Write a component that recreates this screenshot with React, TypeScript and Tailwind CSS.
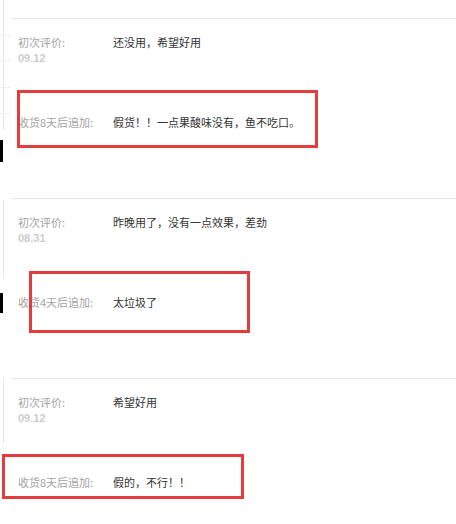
import React from "react";

type Review = {
  first: string;
  date: string;
  appendLabel: string;
  append: string;
};

const reviews: Review[] = [
  { first: "还没用，希望好用", date: "09.12", appendLabel: "收货8天后追加:", append: "假货！！一点果酸味没有，鱼不吃口。" },
  { first: "昨晚用了，没有一点效果，差劲", date: "08.31", appendLabel: "收货4天后追加:", append: "太垃圾了" },
  { first: "希望好用", date: "09.12", appendLabel: "收货8天后追加:", append: "假的，不行！！" },
];

// red annotation boxes drawn over the screenshot
const marks = [
  "left-[17px] top-[90px] w-[301px] h-[58px]",
  "left-[29px] top-[271px] w-[221px] h-[62px]",
  "left-[2px] top-[454px] w-[242px] h-[45px]",
];

function ReviewBlock({ review }: { review: Review }) {
  return (
    <div className="h-[180px] border-t border-[#e6e6e6] pl-[6px] pt-[15px]">
      <div className="flex">
        <div className="w-[95px] shrink-0">
          <div className="leading-[16px] text-[#a3a3a3]">初次评价:</div>
          <div className="font-['Liberation_Sans',sans-serif] font-bold leading-[16px] text-[#cccccc]">
            {review.date}
          </div>
        </div>
        <div className="leading-[16px] text-[#333]">{review.first}</div>
      </div>
      <div className="mt-[48px] flex">
        <div className="w-[95px] shrink-0 leading-[16px] text-[#a3a3a3]">{review.appendLabel}</div>
        <div className="leading-[16px] text-[#333]">{review.append}</div>
      </div>
    </div>
  );
}

function LeftStrip() {
  return (
    <div className="w-[12px] shrink-0">
      <div className="relative h-[130px]">
        <div className="ml-[3px] h-full w-px bg-[#e4e4e4]" />
        <div className="absolute left-0 top-[35px] h-px w-[10px] bg-[#f0f0f0]" />
        <div className="absolute left-0 top-[60px] h-px w-[10px] bg-[#f0f0f0]" />
        <div className="absolute left-0 top-[87px] h-px w-[10px] bg-[#f0f0f0]" />
        <div className="absolute left-0 top-[113px] h-px w-[10px] bg-[#f0f0f0]" />
      </div>
      <div className="mt-[10px] h-[22px] w-[3px] bg-black" />
      <div className="mt-[38px] ml-[3px] h-[78px] w-px bg-[#e4e4e4]" />
      <div className="mt-[15px] h-[20px] w-[3px] bg-black" />
      <div className="mt-[65px] ml-[3px] h-[65px] w-px bg-[#e4e4e4]" />
    </div>
  );
}

export default function App() {
  return (
    <div className="relative h-[524px] w-[456px] overflow-hidden bg-white font-['Noto_Sans_CJK_SC',sans-serif] text-[11px]">
      <div className="flex">
        <LeftStrip />
        <div className="flex-1 pt-[18px]">
          {reviews.map((r, i) => (
            <ReviewBlock key={i} review={r} />
          ))}
        </div>
      </div>
      {marks.map((m, i) => (
        <div key={i} className={`absolute border-[3px] border-[#e23c3c] ${m}`} />
      ))}
    </div>
  );
}
